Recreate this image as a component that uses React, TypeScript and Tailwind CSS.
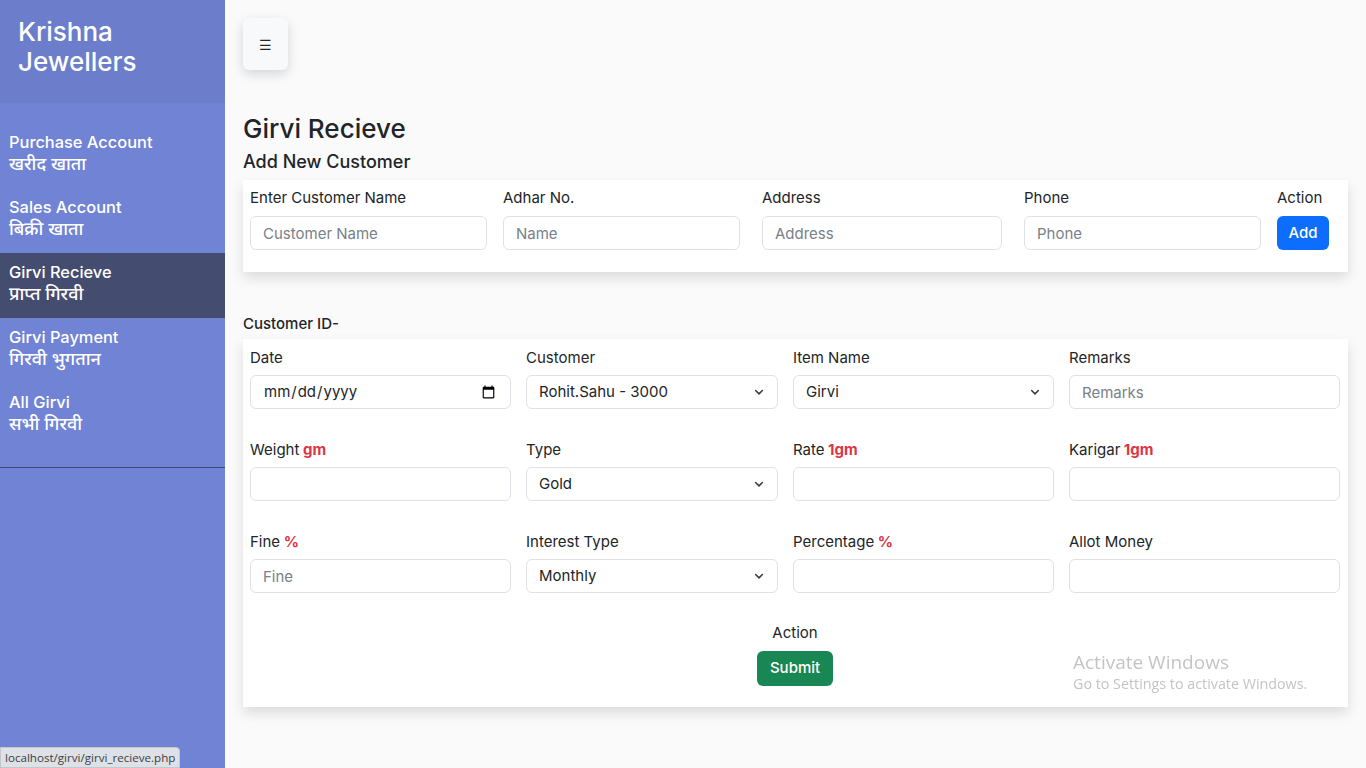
import React from 'react';

const font = { fontFamily: 'Inter, "Noto Sans", "Noto Sans Devanagari", "Lohit Devanagari", sans-serif' };

const navItems = [
  { en: 'Purchase Account', hi: 'खरीद खाता' },
  { en: 'Sales Account', hi: 'बिक्री खाता' },
  { en: 'Girvi Recieve', hi: 'प्राप्त गिरवी', active: true },
  { en: 'Girvi Payment', hi: 'गिरवी भुगतान' },
  { en: 'All Girvi', hi: 'सभी गिरवी' },
];

const Chevron = () => (
  <svg
    className="pointer-events-none absolute right-[13px] top-1/2 -translate-y-1/2"
    width="12"
    height="12"
    viewBox="0 0 16 16"
    fill="none"
    stroke="#343a40"
    strokeWidth="2"
    strokeLinecap="round"
    strokeLinejoin="round">
    <path d="m3.5 6 4.5 4.5L12.5 6" />
  </svg>
);

const inputCls =
  'w-full h-[34px] rounded-[6px] border border-[#dee2e6] bg-white px-3 text-[15px] text-[#212529] placeholder:text-[#7a8087] outline-none';

const Field = ({
  label,
  unit,
  tight,
  children,
}: {
  label: string;
  unit?: string;
  tight?: boolean;
  children: React.ReactNode;
}) => (
  <div className="flex flex-col">
    <label className={`text-[15px] leading-[21px] text-[#212529] ${tight ? 'mb-[7px]' : 'mb-[8px]'}`}>
      {label}
      {unit && <span className="font-bold text-[#dc3545]"> {unit}</span>}
    </label>
    {children}
  </div>
);

const Select = ({ value }: { value: string }) => (
  <div className="relative">
    <select className={`${inputCls} appearance-none pr-8`} defaultValue={value}>
      <option>{value}</option>
    </select>
    <Chevron />
  </div>
);

export default function App() {
  return (
    <div className="flex min-h-[768px] w-full bg-[#fafafa]" style={font}>
      {/* sidebar */}
      <aside className="w-[225px] shrink-0 bg-[#7083d4] text-white">
        <div className="h-[103px] bg-[#6b7dcb] px-[18px] pt-[17px]">
          <h1 className="text-[26px] leading-[30px] font-medium">Krishna Jewellers</h1>
        </div>
        <nav className="pt-[20px] pb-[19px] border-b border-[#3d4a75]">
          {navItems.map((item) => (
            <div
              key={item.en}
              className={`h-[65px] px-[9px] pt-[8px] ${item.active ? 'bg-[#444c70]' : ''}`}>
              <div className="text-[16.4px] leading-[22px] font-medium">{item.en}</div>
              <div className="text-[18px] leading-[22px] font-medium">{item.hi}</div>
            </div>
          ))}
        </nav>
      </aside>

      {/* main */}
      <main className="flex-1 pl-[18px] pr-[18px] pt-[18px]">
        <button className="w-[45px] h-[52px] rounded-[6px] bg-[#f8f9fa] shadow-[0_4px_12px_rgba(0,0,0,0.15)] text-[14px] text-[#212529]">
          ☰
        </button>

        <h2 className="mt-[43px] text-[26px] leading-[31px] font-medium text-[#212529]">Girvi Recieve</h2>
        <h3 className="mt-[7px] text-[18px] leading-[22px] font-medium text-[#212529]">Add New Customer</h3>

        <div className="mt-[7px] bg-white shadow-[0_6px_12px_rgba(0,0,0,0.12)] pl-[7px] pr-[19px] pt-[7px] pb-[22px]">
          <div className="flex">
            <div className="w-[253px] pr-[16px]">
              <Field label="Enter Customer Name">
                <input className={inputCls} placeholder="Customer Name" />
              </Field>
            </div>
            <div className="w-[259px] pr-[22px]">
              <Field label="Adhar No.">
                <input className={inputCls} placeholder="Name" />
              </Field>
            </div>
            <div className="w-[262px] pr-[22px]">
              <Field label="Address">
                <input className={inputCls} placeholder="Address" />
              </Field>
            </div>
            <div className="w-[253px] pr-[16px]">
              <Field label="Phone">
                <input className={inputCls} placeholder="Phone" />
              </Field>
            </div>
            <div>
              <Field label="Action">
                <button className="h-[34px] px-[11.5px] rounded-[6px] bg-[#0d6efd] text-white text-[15px] font-medium">
                  Add
                </button>
              </Field>
            </div>
          </div>
        </div>

        <p className="mt-[41px] text-[15px] leading-[21px] font-medium text-[#212529]">Customer ID-</p>

        <div className="mt-[5px] bg-white shadow-[0_6px_12px_rgba(0,0,0,0.12)] pl-[7px] pr-[8px] pt-[8px] pb-[21px]">
          <div className="grid grid-cols-[261px_252px_261px_271px] gap-x-[15px] gap-y-[30px]">
            <Field tight label="Date">
              <input type="date" className={inputCls} />
            </Field>
            <Field tight label="Customer">
              <Select value="Rohit.Sahu - 3000" />
            </Field>
            <Field tight label="Item Name">
              <Select value="Girvi" />
            </Field>
            <Field tight label="Remarks">
              <input className={inputCls} placeholder="Remarks" />
            </Field>

            <Field tight label="Weight" unit="gm">
              <input className={inputCls} />
            </Field>
            <Field tight label="Type">
              <Select value="Gold" />
            </Field>
            <Field tight label="Rate" unit="1gm">
              <input className={inputCls} />
            </Field>
            <Field tight label="Karigar" unit="1gm">
              <input className={inputCls} />
            </Field>

            <Field tight label="Fine" unit="%">
              <input className={inputCls} placeholder="Fine" />
            </Field>
            <Field tight label="Interest Type">
              <Select value="Monthly" />
            </Field>
            <Field tight label="Percentage" unit="%">
              <input className={inputCls} />
            </Field>
            <Field tight label="Allot Money">
              <input className={inputCls} />
            </Field>
          </div>

          <div className="mt-[29px] flex flex-col items-center">
            <span className="text-[15px] leading-[21px] text-[#212529]">Action</span>
            <button className="mt-[8px] h-[35px] px-[13px] rounded-[6px] bg-[#198754] text-white text-[15px] font-medium">
              Submit
            </button>
          </div>
        </div>
      </main>

      {/* windows watermark */}
      <div
        className="fixed left-[1073px] top-[650px] text-[#c4c4c4] pointer-events-none"
        style={{ fontFamily: '"Open Sans", "Noto Sans", sans-serif' }}>
        <div className="text-[19px] leading-[24px]">Activate Windows</div>
        <div className="text-[14.3px] leading-[19px]">Go to Settings to activate Windows.</div>
      </div>

      {/* browser status bar */}
      <div
        className="fixed left-0 bottom-0 h-[21px] px-[4px] bg-[#dee1e6] border border-[#c4c7cc] rounded-tr-[4px] text-[11.6px] leading-[19px] text-[#3c4043]"
        style={{ fontFamily: '"Open Sans", "Noto Sans", sans-serif' }}>
        localhost/girvi/girvi_recieve.php
      </div>
    </div>
  );
}
